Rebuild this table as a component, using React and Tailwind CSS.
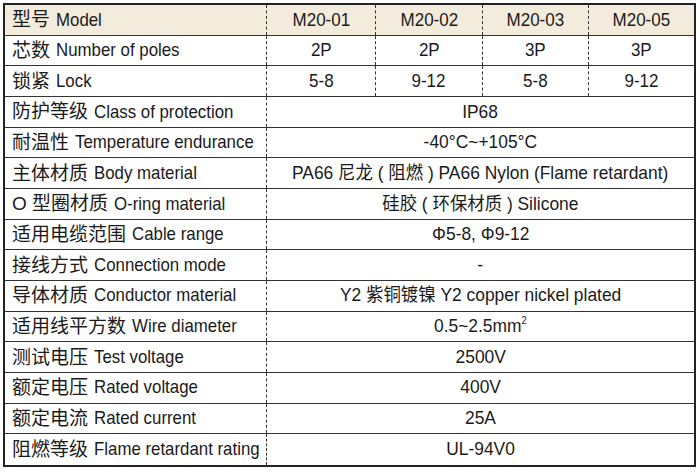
import React from "react";

const rows4 = [
  { label: ["芯数", "Number of poles"], vals: ["2P", "2P", "3P", "3P"] },
  { label: ["锁紧", "Lock"], vals: ["5-8", "9-12", "5-8", "9-12"] },
];

const rowsMerged = [
  [["防护等级", "Class of protection"], "IP68"],
  [["耐温性", "Temperature endurance"], "-40°C~+105°C"],
  [["主体材质", "Body material"], "PA66 尼龙 ( 阻燃 ) PA66 Nylon (Flame retardant)"],
  [["O 型圈材质", "O-ring material"], "硅胶 ( 环保材质 ) Silicone"],
  [["适用电缆范围", "Cable range"], "Φ5-8, Φ9-12"],
  [["接线方式", "Connection mode"], "-"],
  [["导体材质", "Conductor material"], "Y2 紫铜镀镍 Y2 copper nickel plated"],
  [["适用线平方数", "Wire diameter"], "MM2"],
  [["测试电压", "Test voltage"], "2500V"],
  [["额定电压", "Rated voltage"], "400V"],
  [["额定电流", "Rated current"], "25A"],
  [["阻燃等级", "Flame retardant rating"], "UL-94V0"],
];

function Row({ label, children, header, last }) {
  return (
    <div
      className={
        "flex h-[30.67px] " +
        (last ? "" : "border-b border-[#333] ") +
        (header ? "bg-[#f3ecdc]" : "bg-white")
      }
    >
      <div className="w-[262px] shrink-0 flex items-center pl-[7px] border-r border-dashed border-[#333] whitespace-nowrap overflow-visible">
        <span className="shrink-0 text-[19px]">{label[0]}</span>
        <span className="shrink-0 ml-[6px] inline-block scale-x-[0.91] origin-left">{label[1]}</span>
      </div>
      {children}
    </div>
  );
}

function Cells({ vals }) {
  const widths = ["w-[109px]", "w-[107px]", "w-[106px]", "flex-1"];
  return vals.map((v, i) => (
    <div
      key={i}
      className={
        widths[i] +
        " flex items-center justify-center " +
        (i < 3 ? "border-r border-dashed border-[#333]" : "")
      }
    >
      <span className="inline-block scale-x-[0.92]">{v}</span>
    </div>
  ));
}

export default function App() {
  return (
    <div className="w-[700px] h-[472px] bg-white pt-[3px] pl-[3px]">
      <div
        className="w-[693px] border-2 border-[#222] text-[18.5px] text-[#1a1a1a] leading-none"
        style={{ fontFamily: '"Liberation Sans", "Noto Sans CJK SC", sans-serif' }}
      >
        <Row label={["型号", "Model"]} header>
          <Cells vals={["M20-01", "M20-02", "M20-03", "M20-05"]} />
        </Row>
        {rows4.map((r) => (
          <Row key={r.label[1]} label={r.label}>
            <Cells vals={r.vals} />
          </Row>
        ))}
        {rowsMerged.map(([l, v], i) => (
          <Row key={l[1]} label={l} last={i === rowsMerged.length - 1}>
            <div className="flex-1 flex items-center justify-center whitespace-nowrap">
              <span className="inline-block scale-x-[0.94]">
                {v === "MM2" ? (
                  <>
                    0.5~2.5mm
                    <span className="inline-block text-[10px] relative -top-[8px]">2</span>
                  </>
                ) : (
                  v
                )}
              </span>
            </div>
          </Row>
        ))}
      </div>
    </div>
  );
}
